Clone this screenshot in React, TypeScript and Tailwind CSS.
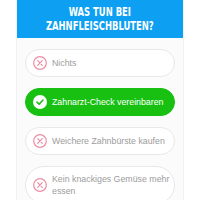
import React from "react";

const XIcon = () => (
  <svg width="14" height="14" viewBox="0 0 14 14" className="shrink-0">
    <circle cx="7" cy="7" r="6.3" fill="none" stroke="#ec8fa2" strokeWidth="1.2" />
    <path d="M4.7 4.7 L9.3 9.3 M9.3 4.7 L4.7 9.3" stroke="#ec8fa2" strokeWidth="1.2" strokeLinecap="round" />
  </svg>
);

const CheckIcon = () => (
  <svg width="14" height="14" viewBox="0 0 14 14" className="shrink-0">
    <circle cx="7" cy="7" r="7" fill="#ffffff" />
    <path d="M4 7.2 L6.1 9.2 L10 5" fill="none" stroke="#18c012" strokeWidth="1.6" strokeLinecap="round" strokeLinejoin="round" />
  </svg>
);

const Option = ({ text, selected }: { text: string; selected?: boolean }) => (
  <div
    className={
      selected
        ? "flex items-center gap-[5px] rounded-full bg-[#18c012] pl-[7px] pr-[4px] py-[6px] border border-[#18c012]"
        : "flex items-center gap-[5px] rounded-full bg-white pl-[7px] pr-[4px] py-[6px] border border-[#e8e8e8]"
    }
  >
    {selected ? <CheckIcon /> : <XIcon />}
    <span
      className={
        selected
          ? "text-[8.8px] leading-[12px] text-white"
          : "text-[8.8px] leading-[12px] text-[#9c9c9c]"
      }
      style={{ fontFamily: '"Liberation Sans", Arial, sans-serif' }}
    >
      {text}
    </span>
  </div>
);

export default function App() {
  return (
    <div className="w-[200px] h-[200px] bg-white overflow-hidden">
      <div className="mx-[16px] w-[168px] h-[200px] bg-[#fbfbfb] border-x border-[#f1f1f1] flex flex-col">
        <div className="h-[38px] shrink-0 bg-[#0d9ff2] flex flex-col items-center justify-center">
          <div
            className="text-white font-bold uppercase text-[13px] leading-[14px] text-center scale-x-[0.72]"
            style={{ fontFamily: '"DejaVu Sans Condensed", "DejaVu Sans", sans-serif' }}
          >
            <div>WAS TUN BEI</div>
            <div className="whitespace-nowrap">ZAHNFLEISCHBLUTEN?</div>
          </div>
        </div>
        <div className="flex flex-col gap-[11px] px-[8px] pt-[11px]">
          <Option text="Nichts" />
          <Option text="Zahnarzt-Check vereinbaren" selected />
          <Option text="Weichere Zahnbürste kaufen" />
          <Option text="Kein knackiges Gemüse mehr essen" />
        </div>
      </div>
    </div>
  );
}
